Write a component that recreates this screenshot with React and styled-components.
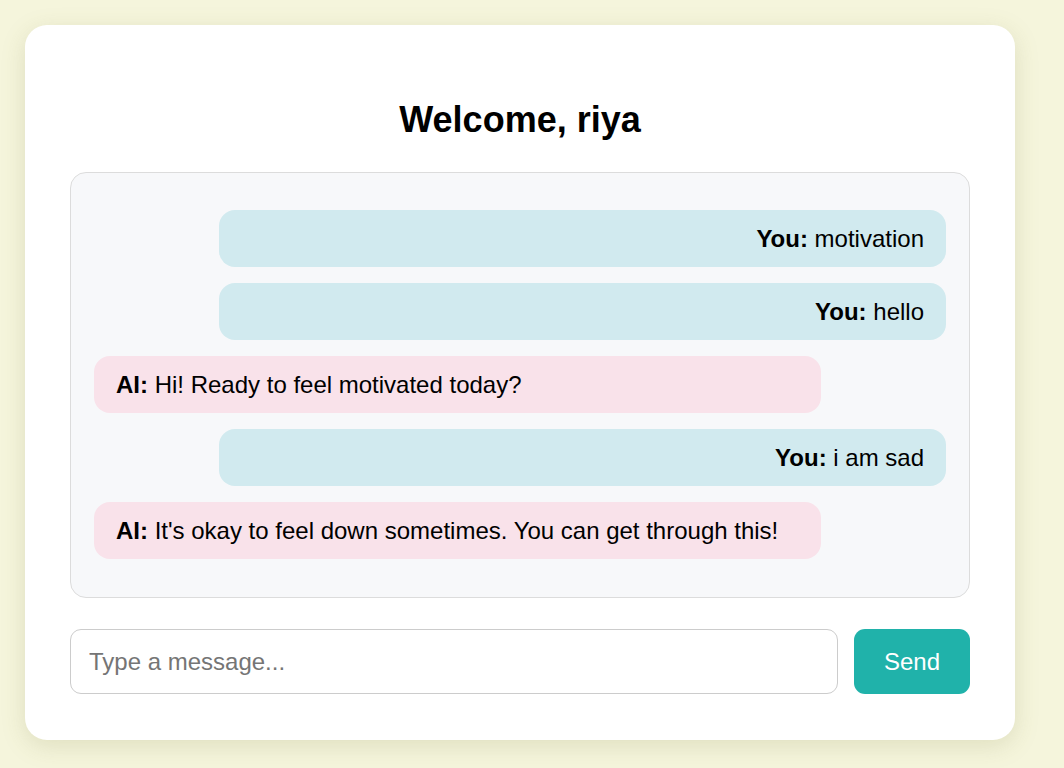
import styled, { createGlobalStyle } from "styled-components";

const GlobalStyle = createGlobalStyle`
  html, body {
    margin: 0;
    padding: 0;
    background: #f5f5dc;
    font-family: "Liberation Sans", Arial, sans-serif;
  }
`;

const Page = styled.div`
  padding: 25px;
  min-height: 768px;
  box-sizing: border-box;
`;

const Card = styled.div`
  width: 990px;
  height: 715px;
  box-sizing: border-box;
  background: #fff;
  border-radius: 22px;
  box-shadow: 0 6px 24px rgba(120, 120, 60, 0.18);
  padding: 45px 45px;
  display: flex;
  flex-direction: column;
`;

const Title = styled.h2`
  margin: 31px 0 33px;
  font-size: 36px;
  line-height: 38px;
  font-weight: bold;
  text-align: center;
  color: #000;
`;

const ChatBox = styled.div`
  border: 1px solid #dcdcdc;
  border-radius: 16px;
  background: #f7f8fa;
  padding: 37px 23px 38px;
  display: flex;
  flex-direction: column;
  gap: 16px;
`;

const Bubble = styled.div`
  width: 727px;
  box-sizing: border-box;
  align-self: ${(p) => (p.$user ? "flex-end" : "flex-start")};
  text-align: ${(p) => (p.$user ? "right" : "left")};
  background: ${(p) => (p.$user ? "#d1eaef" : "#f9e2ea")};
  border-radius: 16px;
  padding: 15px 22px;
  font-size: 24px;
  line-height: 27px;
  color: #000;

  b {
    font-weight: bold;
  }
`;

const InputRow = styled.div`
  display: flex;
  gap: 16px;
  margin-top: 31px;
`;

const Input = styled.input`
  flex: 1;
  height: 65px;
  box-sizing: border-box;
  border: 1px solid #ccc;
  border-radius: 11px;
  padding: 0 18px;
  font-family: "Liberation Sans", Arial, sans-serif;
  font-size: 24px;
  outline: none;

  &::placeholder {
    color: #757575;
  }
`;

const SendButton = styled.button`
  width: 116px;
  height: 65px;
  border: none;
  border-radius: 11px;
  background: #20b2aa;
  color: #fff;
  font-family: "Liberation Sans", Arial, sans-serif;
  font-size: 24px;
  cursor: pointer;
`;

const messages = [
  { user: true, text: "motivation" },
  { user: true, text: "hello" },
  { user: false, text: "Hi! Ready to feel motivated today?" },
  { user: true, text: "i am sad" },
  { user: false, text: "It's okay to feel down sometimes. You can get through this!" },
];

export default function App() {
  return (
    <>
      <GlobalStyle />
      <Page>
        <Card>
          <Title>Welcome, riya</Title>
          <ChatBox>
            {messages.map((m, i) => (
              <Bubble key={i} $user={m.user}>
                <b>{m.user ? "You:" : "AI:"}</b> {m.text}
              </Bubble>
            ))}
          </ChatBox>
          <InputRow>
            <Input placeholder="Type a message..." />
            <SendButton>Send</SendButton>
          </InputRow>
        </Card>
      </Page>
    </>
  );
}
